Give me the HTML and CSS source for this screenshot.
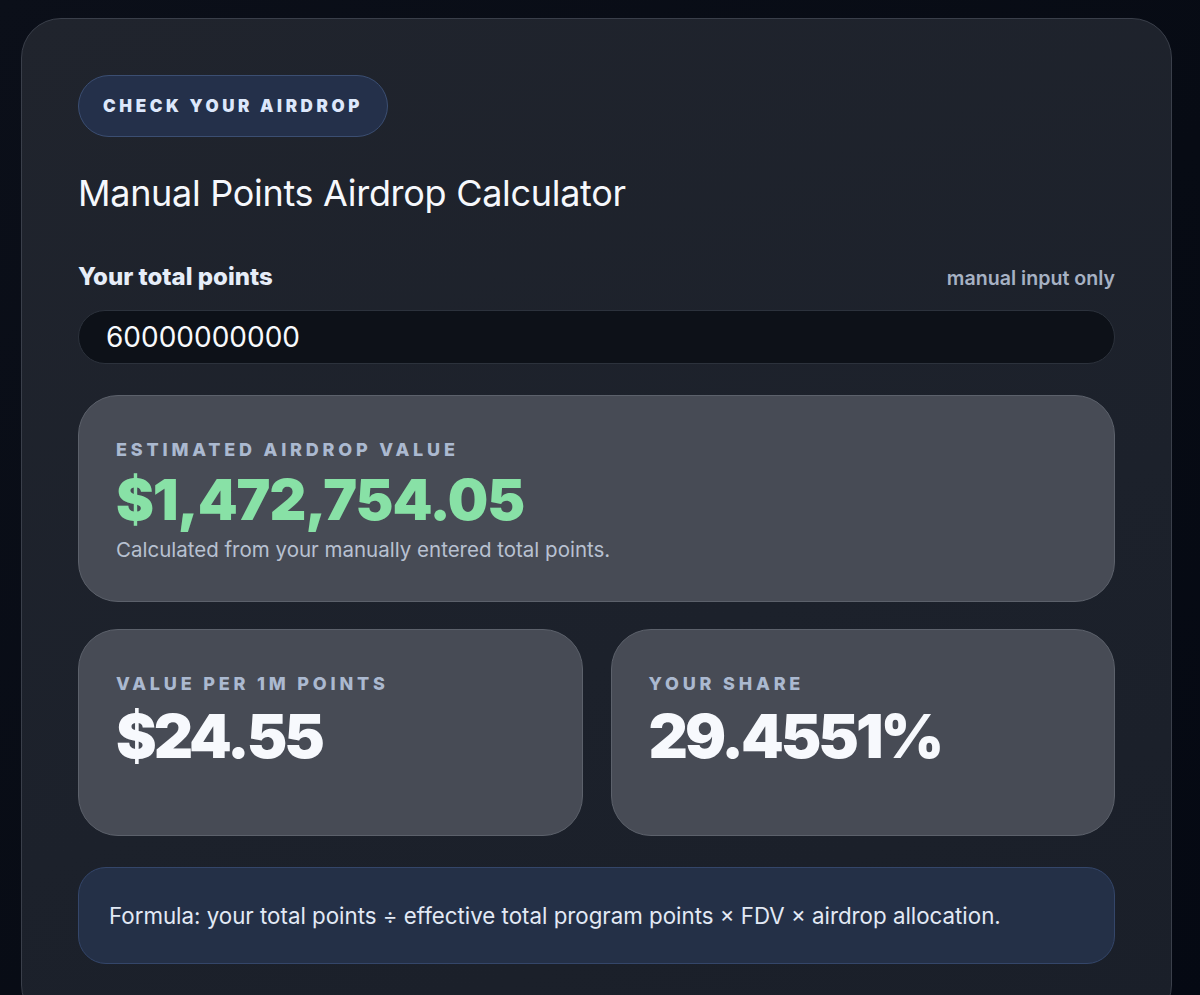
FILE: index.html
```html
<!DOCTYPE html>
<html lang="en">
<head>
  <meta charset="UTF-8">
  <title>Manual Points Airdrop Calculator</title>
  <link rel="stylesheet" href="styles.css">
</head>
<body>
  <div class="panel">
    <div class="badge">CHECK YOUR AIRDROP</div>
    <h1 class="title">Manual Points Airdrop Calculator</h1>

    <div class="field-head">
      <label for="points">Your total points</label>
      <span class="hint">manual input only</span>
    </div>
    <input class="points-input" id="points" type="text" value="60000000000">

    <div class="stat stat-main">
      <div class="stat-label">Estimated airdrop value</div>
      <div class="stat-value green">$1,472,754.05</div>
      <div class="stat-note">Calculated from your manually entered total points.</div>
    </div>

    <div class="stat-grid">
      <div class="stat">
        <div class="stat-label">Value per 1M points</div>
        <div class="stat-value small">$24.55</div>
      </div>
      <div class="stat">
        <div class="stat-label">Your share</div>
        <div class="stat-value small">29.4551%</div>
      </div>
    </div>

    <div class="formula">
      Formula: your total points ÷ effective total program points × FDV × airdrop allocation.
    </div>
  </div>
</body>
</html>
```

FILE: styles.css
```css
body {
  margin: 0;
  min-height: 100vh;
  background: linear-gradient(135deg, #0b0f19 0%, #070b14 60%, #050913 100%);
  font-family: Inter, "Noto Sans", sans-serif;
  color: #f4f7fb;
  padding: 18px 28px 0 21px;
  box-sizing: border-box;
  overflow: hidden;
}

.panel {
  border: 1px solid #3a3f4a;
  border-radius: 40px;
  background: linear-gradient(160deg, #20242d 0%, #1c212b 60%, #1a1f29 100%);
  padding: 56px 56px 60px 56px;
  display: flex;
  flex-direction: column;
  align-items: stretch;
}

.badge {
  align-self: flex-start;
  height: 62px;
  box-sizing: border-box;
  padding: 0 24px;
  display: flex;
  align-items: center;
  border-radius: 31px;
  border: 1px solid #3b4e72;
  background: #24304a;
  color: #dce7fb;
  font-size: 17px;
  font-weight: 900;
  letter-spacing: 3.6px;
}

.title {
  margin: 34px 0 0 0;
  font-size: 36px;
  font-weight: 400;
  line-height: 44px;
  letter-spacing: -0.3px;
  color: #f6f8fc;
}

.field-head {
  margin-top: 47px;
  display: flex;
  justify-content: space-between;
  align-items: baseline;
}

.field-head label {
  font-size: 24px;
  font-weight: 800;
  color: #e6edf8;
}

.hint {
  font-size: 19.6px;
  font-weight: 600;
  color: #a6b1c3;
}

.points-input {
  margin-top: 19px;
  height: 54px;
  box-sizing: border-box;
  border-radius: 27px;
  border: 1px solid #2c323c;
  background: #0d1118;
  color: #f7f9fc;
  font-family: Inter, "Noto Sans", sans-serif;
  font-size: 28px;
  padding: 0 27px;
  outline: none;
}

.stat {
  box-sizing: border-box;
  height: 207px;
  border-radius: 40px;
  border: 1px solid #5c616b;
  background: #474b55;
  padding: 42px 37px;
}

.stat-main {
  margin-top: 31px;
}

.stat-label {
  font-size: 18px;
  font-weight: 800;
  letter-spacing: 3.8px;
  text-transform: uppercase;
  color: #abb9d0;
  line-height: 24px;
}

.stat-value {
  margin-top: 6px;
  font-size: 57px;
  font-weight: 900;
  letter-spacing: -1.1px;
  line-height: 64px;
  color: #f7f9fd;
}

.stat-value.green {
  color: #88e1a6;
}

.stat-value.small {
  margin-top: 5px;
  font-size: 61px;
  letter-spacing: -3px;
  line-height: 70px;
}

.stat-note {
  margin-top: 4px;
  font-size: 20.5px;
  color: #b8c1d1;
  line-height: 28px;
}

.stat-grid {
  margin-top: 27px;
  display: grid;
  grid-template-columns: 1fr 1fr;
  gap: 28px;
}

.formula {
  margin-top: 31px;
  height: 97px;
  box-sizing: border-box;
  border-radius: 28px;
  border: 1px solid #34466a;
  background: #243047;
  padding: 0 30px;
  display: flex;
  align-items: center;
  font-size: 22.3px;
  color: #e2e9f5;
}
```
